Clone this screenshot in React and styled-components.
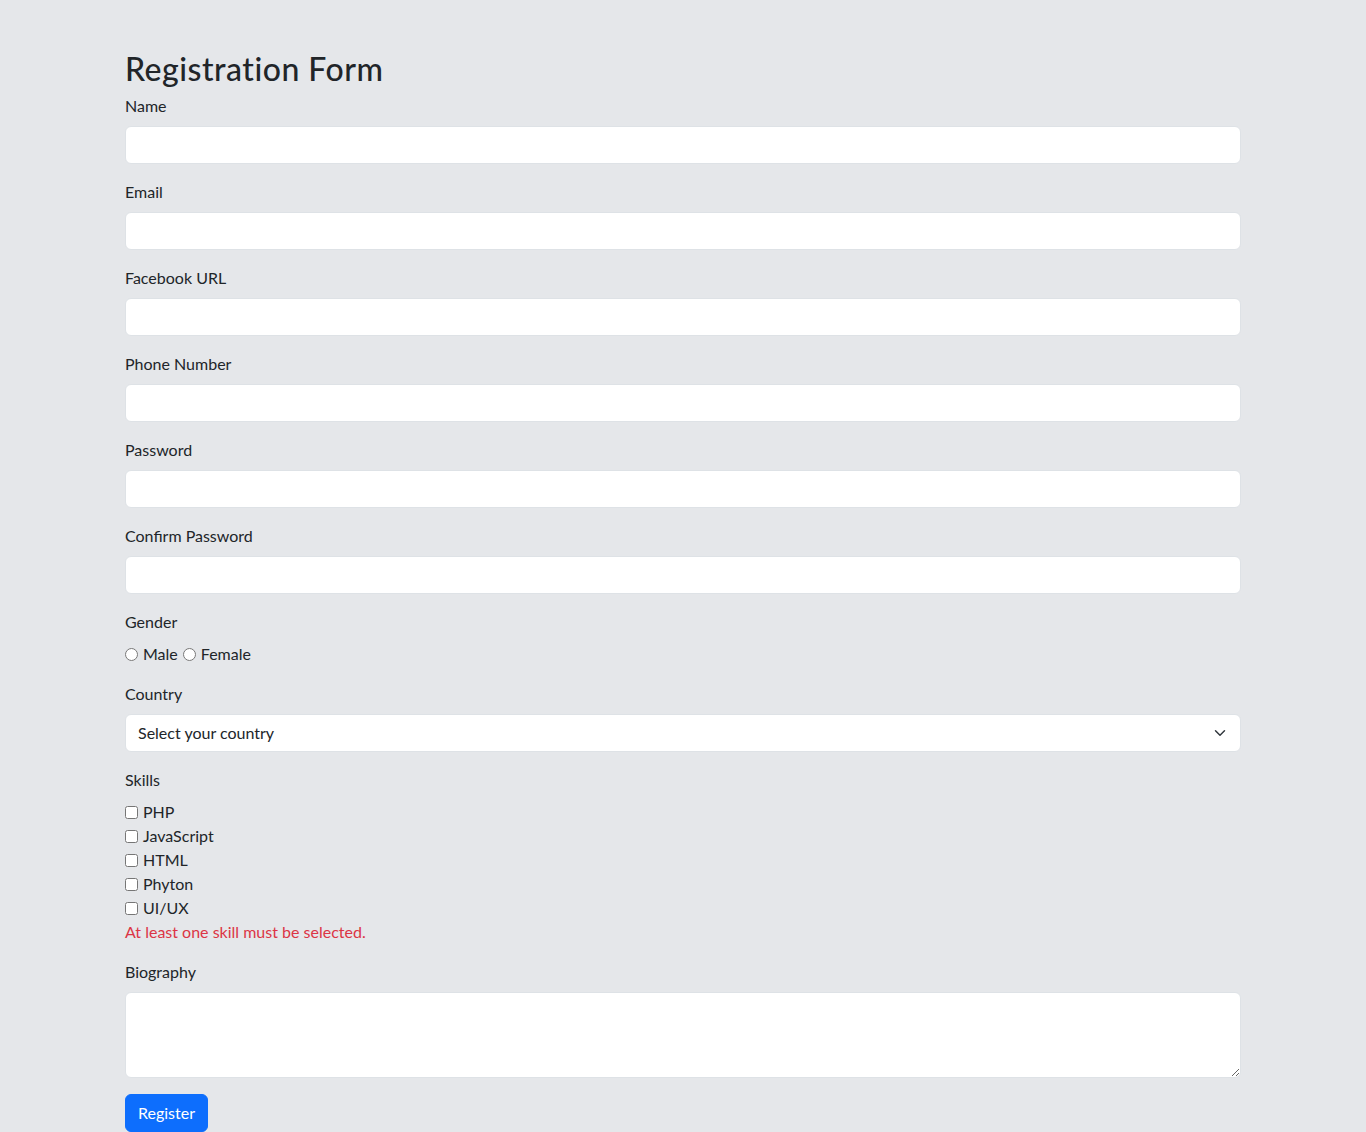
import styled, { createGlobalStyle } from "styled-components";

const GlobalStyle = createGlobalStyle`
  *, *::before, *::after { box-sizing: border-box; }
  body {
    margin: 0;
    background-color: #e5e7ea;
    color: #212529;
    font-family: "Lato", "Noto Sans", sans-serif;
    font-size: 16px;
    line-height: 1.5;
  }
`;

const Container = styled.div`
  width: 1140px;
  margin: 48px auto 0;
  padding: 0 12px;
`;

const Title = styled.h2`
  font-size: 32px;
  font-weight: 500;
  line-height: 1.2;
  letter-spacing: 0.5px;
  padding-top: 2px;
  margin: 0 0 6px;
`;

const Group = styled.div`
  margin-bottom: 16px;
`;

const Label = styled.label`
  display: block;
  margin-bottom: 8px;
`;

const Input = styled.input`
  display: block;
  width: 100%;
  height: 38px;
  padding: 6px 12px;
  font: inherit;
  color: #212529;
  background: #fff;
  border: 1px solid #dee2e6;
  border-radius: 6px;
  outline: none;
`;

const Select = styled.select`
  display: block;
  width: 100%;
  height: 38px;
  padding: 6px 36px 6px 12px;
  font: inherit;
  color: #212529;
  background-color: #fff;
  background-image: url("data:image/svg+xml,%3csvg xmlns='http://www.w3.org/2000/svg' viewBox='0 0 16 16'%3e%3cpath fill='none' stroke='%23343a40' stroke-linecap='round' stroke-linejoin='round' stroke-width='2' d='m2 5 6 6 6-6'/%3e%3c/svg%3e");
  background-repeat: no-repeat;
  background-position: right 12px center;
  background-size: 16px 12px;
  border: 1px solid #dee2e6;
  border-radius: 6px;
  appearance: none;
  outline: none;
`;

const TextArea = styled.textarea`
  display: block;
  width: 100%;
  height: 86px;
  padding: 6px 12px;
  font: inherit;
  background: #fff;
  border: 1px solid #dee2e6;
  border-radius: 6px;
  outline: none;
`;

const ChoiceRow = styled.div`
  height: 24px;
`;

const Choice = styled.input`
  margin: 0 5px 0 0;
  width: 13px;
  height: 13px;
  vertical-align: -1px;
`;

const ChoiceText = styled.label`
  margin-right: ${(p) => (p.$gap ? "5px" : "0")};
`;

const Error = styled.div`
  color: #dc3545;
`;

const Button = styled.button`
  font: inherit;
  color: #fff;
  background: #0d6efd;
  border: 1px solid #0d6efd;
  border-radius: 6px;
  padding: 6px 12px;
  height: 38px;
  cursor: pointer;
`;

const fields = [
  ["name", "Name", "text"],
  ["email", "Email", "email"],
  ["fb", "Facebook URL", "url"],
  ["phone", "Phone Number", "tel"],
  ["pass", "Password", "password"],
  ["confirm", "Confirm Password", "password"],
];

const skills = ["PHP", "JavaScript", "HTML", "Phyton", "UI/UX"];

export default function App() {
  return (
    <>
      <GlobalStyle />
      <Container>
        <Title>Registration Form</Title>
        {fields.map(([id, label, type]) => (
          <Group key={id}>
            <Label htmlFor={id}>{label}</Label>
            <Input id={id} type={type} />
          </Group>
        ))}
        <Group>
          <Label>Gender</Label>
          <div>
            <Choice type="radio" name="gender" id="male" />
            <ChoiceText htmlFor="male" $gap>Male</ChoiceText>
            <Choice type="radio" name="gender" id="female" />
            <ChoiceText htmlFor="female">Female</ChoiceText>
          </div>
        </Group>
        <Group>
          <Label htmlFor="country">Country</Label>
          <Select id="country" defaultValue="">
            <option value="">Select your country</option>
          </Select>
        </Group>
        <Group>
          <Label>Skills</Label>
          {skills.map((s) => (
            <ChoiceRow key={s}>
              <Choice type="checkbox" id={s} />
              <ChoiceText htmlFor={s}>{s}</ChoiceText>
            </ChoiceRow>
          ))}
          <Error>At least one skill must be selected.</Error>
        </Group>
        <Group>
          <Label htmlFor="bio">Biography</Label>
          <TextArea id="bio" rows={3} />
        </Group>
        <Button type="submit">Register</Button>
      </Container>
    </>
  );
}
